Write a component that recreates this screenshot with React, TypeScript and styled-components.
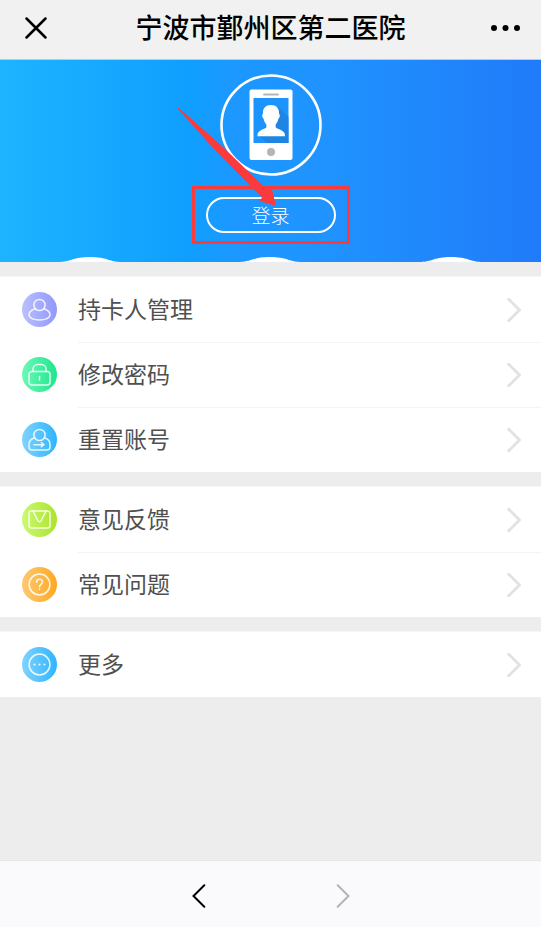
import React from 'react';
import styled, { createGlobalStyle } from 'styled-components';

const GlobalStyle = createGlobalStyle`
  * { box-sizing: border-box; }
  body {
    margin: 0;
    background: #ededed;
    font-family: 'Noto Sans CJK SC', 'Noto Sans', sans-serif;
  }
`;

const Page = styled.div`
  display: flex;
  flex-direction: column;
  min-height: 100vh;
`;

const TopBar = styled.header`
  display: grid;
  grid-template-columns: 1fr auto 1fr;
  align-items: center;
  height: 60px;
  padding: 0 20px 4px;
  background: #f1f1f1;
  border-bottom: 1px solid #c4c8cd;
`;

const Title = styled.h1`
  margin: 0;
  padding-bottom: 1px;
  font-size: 27px;
  line-height: 40px;
  font-weight: 500;
  color: #000;
`;

const IconButton = styled.button<{ $end?: boolean }>`
  display: flex;
  align-items: center;
  justify-content: center;
  justify-self: ${(p) => (p.$end ? 'end' : 'start')};
  width: 32px;
  height: 32px;
  padding: 0;
  border: 0;
  background: none;
  color: #000;
  cursor: pointer;
  &:disabled { color: #b3b3b5; }
`;

const Hero = styled.section`
  position: relative;
  display: flex;
  flex-direction: column;
  align-items: center;
  gap: 10px;
  padding: 14px 0 18px;
  background: linear-gradient(90deg, #1eb4ff 0%, #0f9fff 35%, #1c98ff 43%, #1f93ff 60%, #2086fb 82%, #207bfa 100%);
`;

const Waves = styled.div`
  position: absolute;
  inset: auto 0 0;
  display: grid;
  grid-template-columns: repeat(3, 1fr);
  justify-items: center;
  svg { display: block; }
`;

const LoginFrame = styled.div`
  position: relative;
  padding: 8px 11px;
  border: 3px solid #fb3a3c;
`;

const Arrow = styled.svg`
  position: absolute;
  right: 70px;
  bottom: 33px;
  pointer-events: none;
`;

const LoginButton = styled.button`
  display: block;
  width: 130px;
  height: 36px;
  padding: 0;
  border: 2px solid #fff;
  border-radius: 18px;
  background: none;
  color: #fff;
  font-family: inherit;
  font-size: 19px;
  line-height: 32px;
  font-weight: 300;
  cursor: pointer;
`;

const Menu = styled.main`
  flex: 1;
  display: flex;
  flex-direction: column;
  gap: 14px;
  padding: 14px 0;
`;

const Group = styled.ul`
  margin: 0;
  padding: 0;
  list-style: none;
  background: #fff;
  border-top: 1px solid #f6f6f6;
`;

const Item = styled.li`
  &:not(:first-child) a > span { border-top: 1px solid #f4f4f4; }
`;

const Row = styled.a`
  display: flex;
  align-items: center;
  gap: 21px;
  padding-left: 22px;
  text-decoration: none;
`;

const RowBody = styled.span`
  flex: 1;
  display: flex;
  align-items: center;
  justify-content: space-between;
  height: 65px;
  padding-right: 20px;
  font-size: 23px;
  line-height: 32px;
  color: #505050;
  svg { color: #e2e2e2; }
`;

const Label = styled.span`
  padding-bottom: 4px;
`;

const BottomNav = styled.nav`
  display: flex;
  align-items: center;
  justify-content: center;
  gap: 112px;
  height: 67px;
  padding-top: 3px;
  background: #fafafc;
  border-top: 1px solid #e7e7e7;
`;

function Chevron({ left = false, width = 2 }: { left?: boolean; width?: number }) {
  return (
    <svg width="14" height="24" viewBox="0 0 14 24" fill="none" stroke="currentColor" strokeWidth={width} strokeLinecap="round" strokeLinejoin="miter" aria-hidden="true">
      <path d={left ? 'M12.3 1.2 1.5 12l10.8 10.8' : 'M1.7 1.2 12.5 12 1.7 22.8'} />
    </svg>
  );
}

type BadgeName = 'person' | 'lock' | 'reset' | 'mail' | 'question' | 'more';

const badgeColors: Record<BadgeName, [string, string]> = {
  person: ['#b9bffd', '#9298fb'],
  lock: ['#6bf8b6', '#1fe68d'],
  reset: ['#7fd3fd', '#2fb5fd'],
  mail: ['#cbf873', '#abe42c'],
  question: ['#fec873', '#fda920'],
  more: ['#7fd3fd', '#2fb5fd'],
};

const badgeGlyphs: Record<BadgeName, React.ReactNode> = {
  person: (
    <>
      <circle cx="17.5" cy="13" r="5.6" />
      <path d="M13.2 16.8C9.4 18 7 20.2 7 22.8c0 3.2 4.5 5.2 10.5 5.2S28 26 28 22.8c0-2.6-2.4-4.8-6.2-6" />
    </>
  ),
  lock: (
    <>
      <rect x="7" y="14.5" width="21" height="13.5" rx="3" />
      <path d="M11 14.5v-2.5a4.5 4.5 0 0 1 4.5-4.5h4a4.5 4.5 0 0 1 4.5 4.5v2.5M17.5 19.5v3.5" />
    </>
  ),
  reset: (
    <>
      <circle cx="17.5" cy="13" r="5.6" />
      <path d="M12.6 15.8C9.2 16.8 7 19.5 7 22.5V25a3 3 0 0 0 3 3h15a3 3 0 0 0 3-3v-2.5c0-3-2.2-5.7-5.6-6.7M12 22.7h9.5M19.3 20.7l2.7 2-2.7 2" />
    </>
  ),
  mail: (
    <>
      <rect x="7" y="9" width="21" height="17" rx="2.5" />
      <path d="M11 9.2l4.8 9.3c.9 1.7 2.5 1.7 3.4 0L24 9.2" />
    </>
  ),
  question: (
    <>
      <circle cx="17.5" cy="17.5" r="10.4" />
      <path d="M14.6 15.2c0-1.9 1.2-3 2.9-3s3 1.1 3 2.8c0 2.3-3 2.4-3 4.7" />
      <path d="M17.5 22v.4" />
    </>
  ),
  more: (
    <>
      <circle cx="17.5" cy="17.5" r="10.4" />
      <path d="M12.5 17.5h.01M17.5 17.5h.01M22.5 17.5h.01" strokeWidth="2.2" />
    </>
  ),
};

function Badge({ name }: { name: BadgeName }) {
  const [from, to] = badgeColors[name];
  return (
    <svg width="35" height="35" viewBox="0 0 35 35" aria-hidden="true">
      <defs>
        <linearGradient id={`badge-${name}`}>
          <stop offset="0" stopColor={from} />
          <stop offset="1" stopColor={to} />
        </linearGradient>
      </defs>
      <circle cx="17.5" cy="17.5" r="17.5" fill={`url(#badge-${name})`} />
      <g fill="none" stroke="#fff" strokeOpacity="0.85" strokeWidth="1.5" strokeLinecap="round" strokeLinejoin="round">
        {badgeGlyphs[name]}
      </g>
    </svg>
  );
}

function Avatar() {
  return (
    <svg width="102" height="102" viewBox="0 0 102 102" role="img" aria-label="用户头像">
      <circle cx="51" cy="51" r="49.5" fill="none" stroke="#fff" strokeWidth="2.6" />
      <rect x="29.5" y="15.5" width="43" height="70.5" rx="2" fill="#fff" />
      <rect x="33.5" y="24" width="35" height="45" fill="#1b95fd" />
      <path d="M58 32.5 68.500 43v26H47l-8-7Z" fill="#1e86e2" />
      <path d="M51 31c-5.3 0-8.2 3.4-8 8 0 1.2-.9 1.5-.8 2.6.1 1.5.6 2.800 1.500 3.500.4 2.300 1.300 4 2.600 5.200v3.200c-1.600 1.500-8.700 2.700-8.800 7.500v1.300h27.500V61c-.1-4.800-7.700-6-9.300-7.500v-3.200c1.300-1.200 2.200-2.900 2.600-5.200.9-.7 1.400-2 1.500-3.500.1-1.100-.8-1.400-.8-2.600.2-4.600-2.700-8-8-8Z" fill="#fff" />
      <rect x="43" y="19.5" width="16" height="2" rx="1" fill="#b5b5b5" />
      <circle cx="51" cy="78" r="4" fill="#b5b5b5" />
    </svg>
  );
}

const groups: { icon: BadgeName; label: string }[][] = [
  [
    { icon: 'person', label: '持卡人管理' },
    { icon: 'lock', label: '修改密码' },
    { icon: 'reset', label: '重置账号' },
  ],
  [
    { icon: 'mail', label: '意见反馈' },
    { icon: 'question', label: '常见问题' },
  ],
  [{ icon: 'more', label: '更多' }],
];

export default function App() {
  return (
    <Page>
      <GlobalStyle />
      <TopBar>
        <IconButton aria-label="关闭">
          <svg width="24" height="24" viewBox="0 0 24 24" stroke="currentColor" strokeWidth="2.5" strokeLinecap="round">
            <path d="M2.5 2.5l19 19M21.5 2.5l-19 19" />
          </svg>
        </IconButton>
        <Title>宁波市鄞州区第二医院</Title>
        <IconButton $end aria-label="更多选项">
          <svg width="32" height="8" viewBox="0 0 32 8" fill="currentColor">
            <circle cx="5" cy="4" r="3" />
            <circle cx="16.5" cy="4" r="3" />
            <circle cx="28" cy="4" r="3" />
          </svg>
        </IconButton>
      </TopBar>
      <Hero>
        <Avatar />
        <LoginFrame>
          <LoginButton>登录</LoginButton>
          <Arrow width="100" height="100" viewBox="0 0 100 100" aria-hidden="true">
            <path d="M1 0 2 0 46 39 90 81.5 95 81 99 98 82.5 93 85 89.5 38 42 1 1Z" fill="#fb3a3c" />
          </Arrow>
        </LoginFrame>
        <Waves>
          {[0, 1, 2].map((n) => (
            <svg key={n} width="60" height="5" viewBox="0 0 60 5" aria-hidden="true">
              <path d="M0 5C12 4.5 13 0 30 0s18 4.5 30 5Z" fill="#fff" />
            </svg>
          ))}
        </Waves>
      </Hero>
      <Menu>
        {groups.map((items) => (
          <Group key={items[0].label}>
            {items.map(({ icon, label }) => (
              <Item key={label}>
                <Row href="#">
                  <Badge name={icon} />
                  <RowBody>
                    <Label>{label}</Label>
                    <Chevron width={3} />
                  </RowBody>
                </Row>
              </Item>
            ))}
          </Group>
        ))}
      </Menu>
      <BottomNav aria-label="页面导航">
        <IconButton aria-label="后退"><Chevron left /></IconButton>
        <IconButton aria-label="前进" disabled><Chevron /></IconButton>
      </BottomNav>
    </Page>
  );
}
